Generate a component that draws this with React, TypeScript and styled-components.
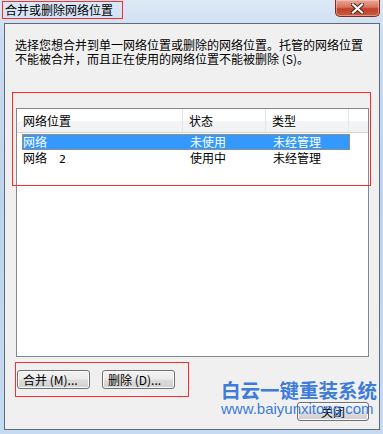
import React from 'react'
import styled, { createGlobalStyle } from 'styled-components'

const GlobalStyle = createGlobalStyle`
  html, body {
    margin: 0;
    padding: 0;
    overflow: hidden;
    background: #c9dcef;
  }
`

const CJK = `'Noto Sans CJK SC', 'Liberation Sans', sans-serif`

const Window = styled.div`
  position: relative;
  width: 383px;
  height: 434px;
  box-sizing: border-box;
  display: flex;
  flex-direction: column;
  background: linear-gradient(180deg, #dbe8f6 0px, #cadcf0 40px, #bed4ec 200px, #c6dbf1 434px);
  font-family: ${CJK};
  font-size: 12px;
  color: #000;
`

const TitleBar = styled.div`
  height: 23px;
  display: flex;
  align-items: flex-start;
  justify-content: space-between;
`

const Title = styled.span`
  margin: 1px 0 0 2px;
  padding: 0 9px 0 2px;
  border: 1px solid #ff2a2a;
  line-height: 16px;
  height: 16px;
  color: #000;
`

const CloseBtn = styled.div`
  width: 45px;
  height: 17px;
  margin-right: 3px;
  box-sizing: border-box;
  border: 1px solid #7b2b22;
  border-top: none;
  border-radius: 0 0 5px 5px;
  background: linear-gradient(180deg, #e9a89a 0%, #d6735f 45%, #c1412b 55%, #c85a3f 100%);
  box-shadow: inset 0 0 0 1px rgba(255, 210, 200, 0.5);
  display: flex;
  align-items: center;
  justify-content: center;
`

const Client = styled.div`
  flex: 1;
  margin: 0 3px 4px 4px;
  border: 1px solid #5f6a78;
  background: #f0f0f0;
  display: flex;
  flex-direction: column;
  padding: 14px 0 0 0;
`

const Intro = styled.p`
  margin: 0 0 0 10px;
  line-height: 14px;
  font-size: 12px;
  white-space: nowrap;
`

const ListView = styled.div`
  margin: 42px 0 0 11px;
  width: 353px;
  height: 249px;
  box-sizing: border-box;
  border: 1px solid #828790;
  background: #fff;
`

const Header = styled.div`
  display: grid;
  grid-template-columns: 166px 83px 83px 1fr;
  height: 24px;
  box-sizing: border-box;
  border-bottom: 1px solid #d5d5d5;
  background: linear-gradient(180deg, #ffffff 0%, #ffffff 50%, #f4f5f7 51%, #f1f2f4 100%);
`

const HeaderCell = styled.div`
  padding-left: 6px;
  line-height: 23px;
  border-right: 1px solid #e3e5e8;
`

const Rows = styled.div`
  padding: 1px 0 0 5px;
`

const Row = styled.div<{ $selected?: boolean }>`
  display: grid;
  grid-template-columns: 167px 83px 78px;
  width: 328px;
  height: 16px;
  box-sizing: border-box;
  line-height: 15px;
  background: ${p => (p.$selected ? '#3399ff' : 'transparent')};
  color: ${p => (p.$selected ? '#fff' : '#000')};
  outline: ${p => (p.$selected ? '1px dotted #e4832c' : 'none')};
  outline-offset: -1px;
`

const Cell = styled.div`
  padding-left: 1px;
  white-space: nowrap;
`

const Suffix = styled.span`
  margin-left: 12px;
  font-family: 'DejaVu Sans', sans-serif;
  font-size: 11px;
`

const ButtonGroup = styled.div`
  align-self: flex-start;
  margin: 5px 0 0 10px;
  padding: 7px 13px 7px 1px;
  border: 1px solid #ff2a2a;
  display: flex;
  gap: 12px;
`

const Button = styled.button<{ $w?: number }>`
  width: ${p => p.$w ?? 73}px;
  height: 19px;
  box-sizing: border-box;
  padding: 0 0 0 5px;
  border: 1px solid #707070;
  border-radius: 3px;
  background: linear-gradient(180deg, #f2f2f2 0%, #ebebeb 48%, #dddddd 52%, #cfcfcf 100%);
  box-shadow: inset 0 0 0 1px #fbfbfb;
  font-family: ${CJK};
  font-size: 12px;
  line-height: 16px;
  color: #000;
  text-align: left;
  white-space: nowrap;
`

const CloseRow = styled.div`
  display: flex;
  justify-content: flex-end;
  margin: 5px 10px 0 0;
`

const CloseButton = styled(Button)`
  text-align: center;
  padding: 0;
`

const Annotation = styled.div`
  position: absolute;
  left: 12px;
  top: 92px;
  width: 359px;
  height: 94px;
  box-sizing: border-box;
  border: 1px solid #ff2a2a;
  pointer-events: none;
`

const Watermark = styled.div`
  position: absolute;
  left: 221px;
  top: 378px;
  display: flex;
  flex-direction: column;
  color: rgba(36, 108, 214, 0.9);
  pointer-events: none;
`

const WatermarkTitle = styled.span`
  font-family: ${CJK};
  font-size: 19.5px;
  font-weight: bold;
  line-height: 24px;
  white-space: nowrap;
`

const WatermarkUrl = styled.span`
  font-family: 'Liberation Sans', sans-serif;
  font-size: 15px;
  line-height: 16px;
  margin-top: -1px;
  white-space: nowrap;
`

const rows = [
  { name: '网络', suffix: '', state: '未使用', kind: '未经管理', selected: true },
  { name: '网络', suffix: '2', state: '使用中', kind: '未经管理' },
]

export default function App() {
  return (
    <>
      <GlobalStyle />
      <Window>
        <TitleBar>
          <Title>合并或删除网络位置</Title>
          <CloseBtn>
            <svg width="13" height="11" viewBox="0 0 13 11">
              <path d="M2 1.5 L11 9.5 M11 1.5 L2 9.5" stroke="#4a2018" strokeWidth="4" strokeLinecap="square" />
              <path d="M2 1.5 L11 9.5 M11 1.5 L2 9.5" stroke="#fff" strokeWidth="2.2" strokeLinecap="square" />
            </svg>
          </CloseBtn>
        </TitleBar>
        <Client>
          <Intro>
            选择您想合并到单一网络位置或删除的网络位置。托管的网络位置
            <br />
            不能被合并，而且正在使用的网络位置不能被删除 (S)。
          </Intro>
          <ListView>
            <Header>
              <HeaderCell>网络位置</HeaderCell>
              <HeaderCell>状态</HeaderCell>
              <HeaderCell>类型</HeaderCell>
              <div />
            </Header>
            <Rows>
              {rows.map(r => (
                <Row key={r.name + r.suffix} $selected={r.selected}>
                  <Cell>
                    {r.name}
                    {r.suffix && <Suffix>{r.suffix}</Suffix>}
                  </Cell>
                  <Cell>{r.state}</Cell>
                  <Cell>{r.kind}</Cell>
                </Row>
              ))}
            </Rows>
          </ListView>
          <ButtonGroup>
            <Button>合并 (M)...</Button>
            <Button>删除 (D)...</Button>
          </ButtonGroup>
          <CloseRow>
            <CloseButton $w={72}>关闭</CloseButton>
          </CloseRow>
        </Client>
        <Annotation />
        <Watermark>
          <WatermarkTitle>白云一键重装系统</WatermarkTitle>
          <WatermarkUrl>www.baiyunxitong.com</WatermarkUrl>
        </Watermark>
      </Window>
    </>
  )
}
